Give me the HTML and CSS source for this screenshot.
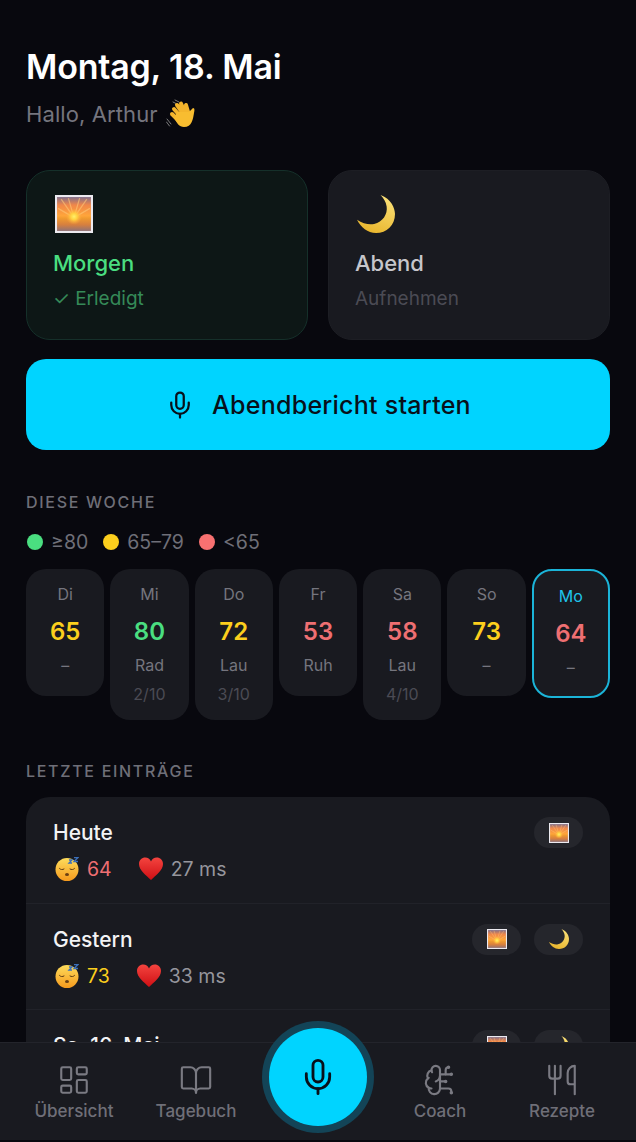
FILE: index.html
```html
<!DOCTYPE html>
<html lang="de">
<head>
    <meta charset="UTF-8">
    <meta name="viewport" content="width=device-width, initial-scale=1.0">
    <title>Übersicht</title>
    <link rel="stylesheet" href="styles.css">
</head>
<body>
    <svg class="defs" width="0" height="0">
        <defs>
            <linearGradient id="sky" x1="0" y1="0" x2="0" y2="1">
                <stop offset="0" stop-color="#746c92"/>
                <stop offset="0.25" stop-color="#f0874a"/>
                <stop offset="0.55" stop-color="#ffa53a"/>
                <stop offset="0.62" stop-color="#f09a30"/>
                <stop offset="0.8" stop-color="#d67f3f"/>
                <stop offset="1" stop-color="#85707f"/>
            </linearGradient>
            <radialGradient id="sunGlow" cx="0.5" cy="0.5" r="0.5">
                <stop offset="0" stop-color="#fff06a"/>
                <stop offset="0.4" stop-color="#ffd040"/>
                <stop offset="1" stop-color="#ffa040" stop-opacity="0"/>
            </radialGradient>
            <linearGradient id="moonFill" x1="0.8" y1="0" x2="0.4" y2="1">
                <stop offset="0" stop-color="#fbe27a"/>
                <stop offset="1" stop-color="#e9b62e"/>
            </linearGradient>
            <linearGradient id="faceFill" x1="0" y1="0" x2="0" y2="1">
                <stop offset="0" stop-color="#fddc5c"/>
                <stop offset="1" stop-color="#f59a1d"/>
            </linearGradient>
            <linearGradient id="heartFill" x1="0" y1="0" x2="0" y2="1">
                <stop offset="0" stop-color="#f4443f"/>
                <stop offset="1" stop-color="#cf0f14"/>
            </linearGradient>
        </defs>
        <symbol id="sunrise" viewBox="0 0 37 37">
            <rect x="1" y="1" width="35" height="35" fill="url(#sky)" stroke="#eceaf0" stroke-width="2"/>
            <g stroke="#ffc877" stroke-width="1.2" opacity="0.6">
                <path d="M18.5 22 L6 4M18.5 22 L13 3M18.500 22 L24 3M18.5 22 L31 4M18.5 22 L3 13M18.5 22 L34 13"/>
            </g>
            <circle cx="18.5" cy="21" r="8" fill="url(#sunGlow)"/>
        </symbol>
        <symbol id="moon" viewBox="0 0 100 100">
            <path d="M62 0C90 10 100 35 100 50C100 80 78 100 50 100C28 100 10 85 0 65C15 75 32 79 45 76C68 71 81 50 78 30C76 18 70 8 62 0Z" fill="url(#moonFill)"/>
        </symbol>
        <symbol id="wave" viewBox="0 0 30 30">
            <g stroke="#8a8a8a" stroke-width="0.9" fill="none" stroke-linecap="round">
                <path d="M1 20l4 5M0.500 23l3 4M9 1l4 2M7 3l3 1.500"/>
            </g>
            <g stroke="#f4b52c" stroke-width="4" stroke-linecap="round" fill="none">
                <path d="M8 10l7 8M11 6l7 10M15 4.500l5 11M20 6l3 10"/>
                <path d="M6 15l6 6"/>
            </g>
            <path d="M11 13l12 0l4-4c2 0 1.500 3 1 5c-1 6-2 14-10 14c-5 0-7-4-10-9z" fill="#f8bd30"/>
        </symbol>
        <symbol id="sleep" viewBox="0 0 24 24">
            <circle cx="12" cy="12.500" r="11.500" fill="url(#faceFill)"/>
            <g stroke="#5b3a12" stroke-width="1" fill="none" stroke-linecap="round">
                <path d="M4.500 11.500c1 1.200 3 1.500 4.500 .5M15 12c1.500 1 3.500 .7 4.500-.5"/>
            </g>
            <ellipse cx="12" cy="17.500" rx="2" ry="1.500" fill="#6b3f12"/>
            <path d="M14 3h3l-3 3h3M19 .5h4l-4 4h4" stroke="#3b6fb8" stroke-width="1.300" fill="none"/>
        </symbol>
        <symbol id="heart" viewBox="0 0 24 24">
            <path d="M12 23C7 18 0 13.500 0 7C0 3 3 .5 6.200 .5C8.800 .5 11 2 12 4.500C13 2 15.200 .5 17.800 .5C21 .5 24 3 24 7C24 13.500 17 18 12 23Z" fill="url(#heartFill)"/>
        </symbol>
    </svg>

    <main class="content">
        <h1 class="title">Montag, 18. Mai</h1>
        <p class="greeting">Hallo, Arthur <svg class="emoji-wave"><use href="#wave"/></svg></p>

        <section class="sessions">
            <div class="session done">
                <svg class="session-icon"><use href="#sunrise"/></svg>
                <div class="session-name">Morgen</div>
                <div class="session-state">✓ Erledigt</div>
            </div>
            <div class="session">
                <svg class="session-icon moon-big"><use href="#moon"/></svg>
                <div class="session-name">Abend</div>
                <div class="session-state">Aufnehmen</div>
            </div>
        </section>

        <button class="start" type="button">
            <svg class="icon start-mic" viewBox="0 0 24 24"><path d="M12 2a3 3 0 0 0-3 3v7a3 3 0 0 0 6 0V5a3 3 0 0 0-3-3Z"/><path d="M19 10v2a7 7 0 0 1-14 0v-2"/><path d="M12 19v3"/></svg>
            Abendbericht starten
        </button>

        <h2 class="section-title week-title">DIESE WOCHE</h2>
        <div class="legend">
            <span class="legend-item"><i class="dot green"></i>≥80</span>
            <span class="legend-item"><i class="dot yellow"></i>65–79</span>
            <span class="legend-item"><i class="dot red"></i>&lt;65</span>
        </div>

        <div class="week">
            <div class="day"><div class="day-name">Di</div><div class="score c-yellow">65</div><div class="sport">–</div></div>
            <div class="day"><div class="day-name">Mi</div><div class="score c-green">80</div><div class="sport">Rad</div><div class="effort">2/10</div></div>
            <div class="day"><div class="day-name">Do</div><div class="score c-yellow">72</div><div class="sport">Lau</div><div class="effort">3/10</div></div>
            <div class="day"><div class="day-name">Fr</div><div class="score c-red">53</div><div class="sport">Ruh</div></div>
            <div class="day"><div class="day-name">Sa</div><div class="score c-red">58</div><div class="sport">Lau</div><div class="effort">4/10</div></div>
            <div class="day"><div class="day-name">So</div><div class="score c-yellow">73</div><div class="sport">–</div></div>
            <div class="day today"><div class="day-name">Mo</div><div class="score c-red">64</div><div class="sport">–</div></div>
        </div>

        <h2 class="section-title list-title">LETZTE EINTRÄGE</h2>
        <div class="entries">
            <div class="entry">
                <div>
                    <div class="entry-date">Heute</div>
                    <div class="entry-stats">
                        <svg class="stat-icon"><use href="#sleep"/></svg><span class="stat-score c-red">64</span>
                        <svg class="stat-icon heart"><use href="#heart"/></svg><span class="stat-hrv">27 ms</span>
                    </div>
                </div>
                <div class="pills">
                    <span class="pill"><svg class="pill-icon"><use href="#sunrise"/></svg></span>
                </div>
            </div>
            <div class="entry">
                <div>
                    <div class="entry-date">Gestern</div>
                    <div class="entry-stats">
                        <svg class="stat-icon"><use href="#sleep"/></svg><span class="stat-score c-yellow">73</span>
                        <svg class="stat-icon heart"><use href="#heart"/></svg><span class="stat-hrv">33 ms</span>
                    </div>
                </div>
                <div class="pills">
                    <span class="pill"><svg class="pill-icon"><use href="#sunrise"/></svg></span>
                    <span class="pill"><svg class="pill-icon"><use href="#moon"/></svg></span>
                </div>
            </div>
            <div class="entry">
                <div>
                    <div class="entry-date">Sa, 16. Mai</div>
                </div>
                <div class="pills">
                    <span class="pill"><svg class="pill-icon"><use href="#sunrise"/></svg></span>
                    <span class="pill"><svg class="pill-icon"><use href="#moon"/></svg></span>
                </div>
            </div>
        </div>
    </main>

    <nav class="tabbar">
        <div class="tab">
            <svg class="icon tab-icon" viewBox="0 0 24 24"><rect x="3" y="3" width="7" height="9" rx="1"/><rect x="14" y="3" width="7" height="5" rx="1"/><rect x="14" y="12" width="7" height="9" rx="1"/><rect x="3" y="16" width="7" height="5" rx="1"/></svg>
            <span>Übersicht</span>
        </div>
        <div class="tab">
            <svg class="icon tab-icon" viewBox="0 0 24 24"><path d="M12 7v14"/><path d="M3 18a1 1 0 0 1-1-1V4a1 1 0 0 1 1-1h5a4 4 0 0 1 4 4 4 4 0 0 1 4-4h5a1 1 0 0 1 1 1v13a1 1 0 0 1-1 1h-6a3 3 0 0 0-3 3 3 3 0 0 0-3-3z"/></svg>
            <span>Tagebuch</span>
        </div>
        <div class="tab-spacer"></div>
        <div class="tab">
            <svg class="icon tab-icon" viewBox="0 0 24 24"><path d="M12 5a3 3 0 1 0-5.997.125 4 4 0 0 0-2.526 5.77 4 4 0 0 0 .556 6.588A4 4 0 1 0 12 18Z"/><path d="M9 13a4.500 4.500 0 0 0 3-4"/><path d="M6.003 5.125A3 3 0 0 0 6.401 6.500"/><path d="M3.477 10.896a4 4 0 0 1 .585-.396"/><path d="M6 18a4 4 0 0 1-1.967-.516"/><path d="M12 13h4"/><path d="M12 18h6a2 2 0 0 1 2 2v1"/><path d="M12 8h8"/><path d="M16 8V5a2 2 0 0 1 2-2"/><circle cx="16" cy="13" r=".5"/><circle cx="18" cy="3" r=".5"/><circle cx="20" cy="21" r=".5"/><circle cx="20" cy="8" r=".5"/></svg>
            <span>Coach</span>
        </div>
        <div class="tab">
            <svg class="icon tab-icon" viewBox="0 0 24 24"><path d="M3 2v7c0 1.100.9 2 2 2h4a2 2 0 0 0 2-2V2"/><path d="M7 2v20"/><path d="M21 15V2a5 5 0 0 0-5 5v6c0 1.100.9 2 2 2h3Zm0 0v7"/></svg>
            <span>Rezepte</span>
        </div>
        <button class="record" type="button">
            <svg class="icon record-mic" viewBox="0 0 24 24"><path d="M12 2a3 3 0 0 0-3 3v7a3 3 0 0 0 6 0V5a3 3 0 0 0-3-3Z"/><path d="M19 10v2a7 7 0 0 1-14 0v-2"/><path d="M12 19v3"/></svg>
        </button>
    </nav>
</body>
</html>
```

FILE: styles.css
```css
* { box-sizing: border-box; }
html, body { margin: 0; height: 100%; }
body { height: 1142px; display: flex; flex-direction: column; overflow: hidden; background-color: #08080e; font-family: Inter, "Noto Sans", sans-serif; color: #fff; }
.defs { position: absolute; }
.icon { fill: none; stroke: currentColor; stroke-width: 1.5; stroke-linecap: round; stroke-linejoin: round; }

.content { flex: 1; min-height: 0; overflow: hidden; padding: 44px 26px 0; }
.title { margin: 0; font-size: 34px; line-height: 46px; font-weight: 600; letter-spacing: -0.2px; }
.greeting { margin: 9px 0 0; font-size: 22px; line-height: 30px; letter-spacing: 0.1px; color: #75757e; display: flex; align-items: center; gap: 8px; }
.emoji-wave { width: 30px; height: 30px; }

.sessions { display: grid; grid-template-columns: 1fr 1fr; gap: 20px; margin-top: 41px; }
.session { height: 170px; padding: 24px 26px; border-radius: 24px; background-color: #191a20; border: 1px solid #1d1e24; }
.session.done { background-color: #0d1716; border-color: #15302a; }
.session-icon { display: block; width: 38px; height: 38px; margin-left: 2px; }
.moon-big { margin-left: 2px; }
.session-name { margin-top: 15px; font-size: 22px; line-height: 30px; font-weight: 500; color: #c6c6cb; }
.done .session-name { color: #4ade80; }
.session-state { margin-top: 8px; font-size: 19px; line-height: 26px; color: #4b4b54; }
.done .session-state { color: #358a58; }

.start { display: flex; align-items: center; justify-content: center; gap: 17px; width: 100%; height: 91px; margin-top: 19px; border: none; border-radius: 20px; background-color: #00d4ff; color: #08101a; font-family: inherit; font-size: 25px; letter-spacing: 0.25px; font-weight: 500; }
.start-mic { width: 30px; height: 30px; stroke-width: 1.8; }

.section-title { margin: 0; font-size: 16px; line-height: 22px; font-weight: 500; letter-spacing: 1.7px; color: #6f6f78; }
.week-title { margin-top: 41px; }
.legend { display: flex; gap: 14px; margin-top: 15px; font-size: 19.500px; line-height: 28px; color: #6f6f78; }
.legend-item { display: flex; align-items: center; gap: 8px; }
.dot { width: 16px; height: 16px; border-radius: 50%; margin-left: 1px; }
.green { background-color: #4ade80; }
.yellow { background-color: #fccf1d; }
.red { background-color: #f87171; }

.week { display: grid; grid-template-columns: repeat(7, 1fr); gap: 6px; align-items: start; margin-top: 13px; }
.day { min-height: 127px; padding: 14px 0 15px; border-radius: 20px; background-color: #191a20; text-align: center; }
.day.today { min-height: 129px; border: 2px solid #1bb4d8; }
.day-name { font-size: 16px; line-height: 22px; color: #75757e; }
.today .day-name { color: #1fc3ea; }
.score { margin-top: 11px; font-size: 24px; line-height: 32px; font-weight: 600; }
.c-yellow { color: #fccf1d; }
.c-green { color: #4ade80; }
.c-red { color: #ee6f72; }
.sport { margin-top: 6px; font-size: 16px; line-height: 22px; color: #75757e; }
.effort { margin-top: 7px; font-size: 16px; line-height: 22px; color: #4b4b54; }

.list-title { margin-top: 40px; }
.entries { margin-top: 15px; border-radius: 24px; background-color: #191a20; }
.entry { display: flex; justify-content: space-between; align-items: flex-start; height: 106.500px; padding: 21px 27px 0 27px; border-bottom: 1px solid #212229; }
.entry-date { font-size: 21px; line-height: 30px; font-weight: 500; color: #f3f3f5; }
.entry-stats { display: flex; align-items: center; margin-top: 7px; font-size: 19.500px; line-height: 28px; }
.stat-icon { width: 24px; height: 24px; margin-left: 2px; }
.heart { margin-left: 27px; }
.stat-score { margin-left: 8px; }
.stat-hrv { margin-left: 8px; color: #96969d; }
.pills { display: flex; gap: 13px; margin-top: -1px; }
.pill { display: flex; align-items: center; justify-content: center; width: 49px; height: 31px; border-radius: 16px; background-color: #25262c; }
.pill-icon { width: 20px; height: 20px; }

.tabbar { position: relative; flex: none; display: grid; grid-template-columns: repeat(5, 1fr); height: 98px; margin-bottom: 2px; padding: 0 13px; background-color: #191a20; border-top: 1px solid #23242b; }
.tab { display: flex; flex-direction: column; align-items: center; padding-top: 20px; font-size: 17px; line-height: 21px; font-weight: 500; color: #6f6f78; }
.tab-icon { width: 34px; height: 34px; margin-bottom: 4px; color: #7a7a82; }
.record { position: absolute; left: 269px; top: -15px; display: flex; align-items: center; justify-content: center; width: 98px; height: 98px; padding: 0; border: none; border-radius: 50%; background-color: #00d4ff; color: #08101a; box-shadow: 0 0 0 7px #134457; }
.record-mic { width: 40px; height: 40px; stroke-width: 1.7; }
```
